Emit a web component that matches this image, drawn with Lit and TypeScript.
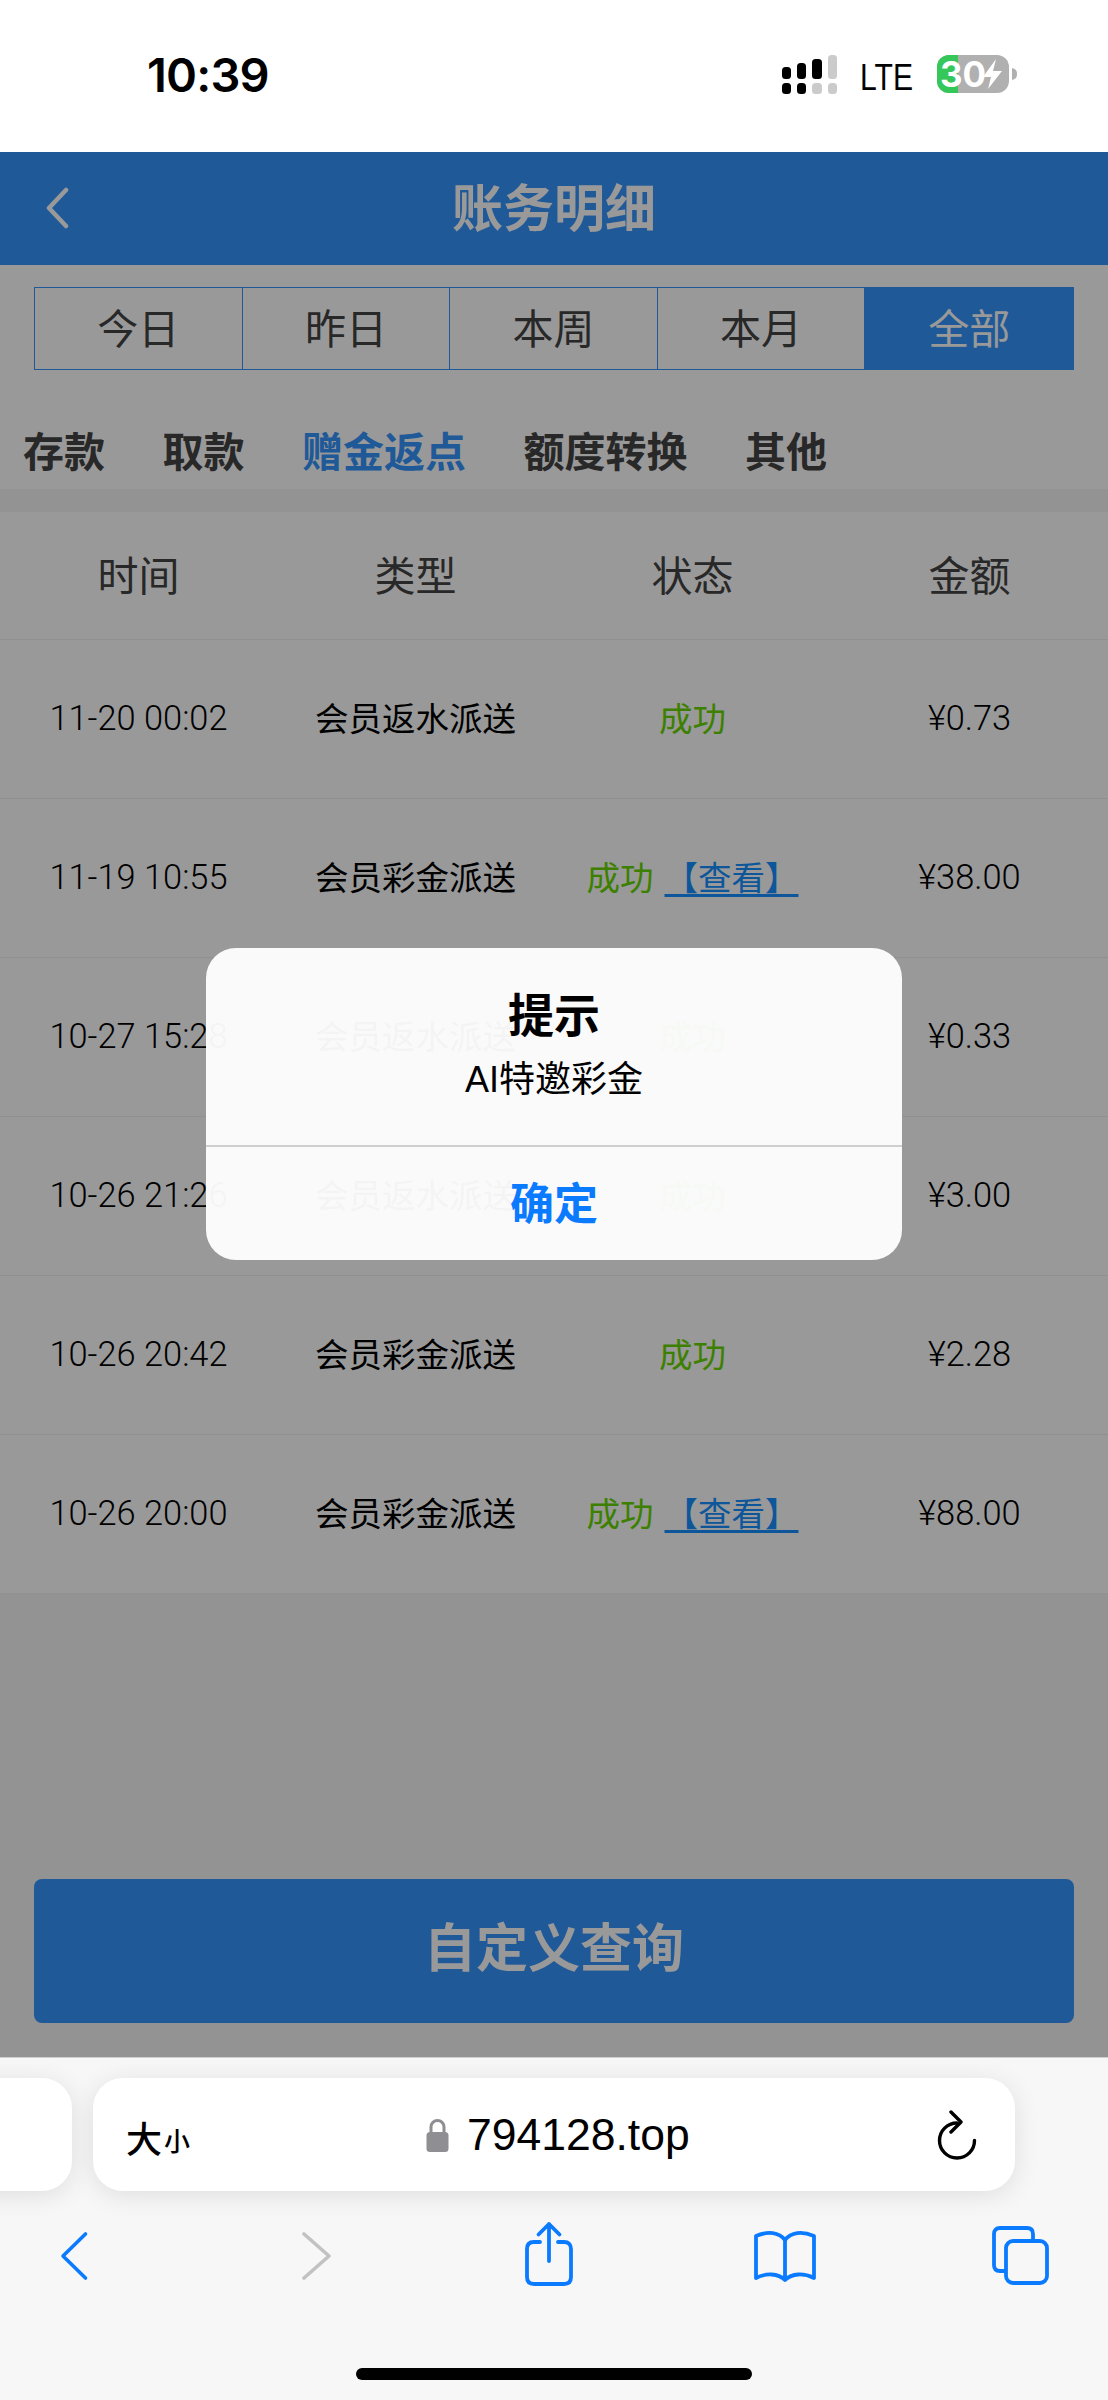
import { LitElement, html, css, svg } from "lit";
import { customElement } from "lit/decorators.js";

const rows = [
  { t: "11-20 00:02", k: "会员返水派送", v: false, a: "¥0.73" },
  { t: "11-19 10:55", k: "会员彩金派送", v: true, a: "¥38.00" },
  { t: "10-27 15:28", k: "会员返水派送", v: false, a: "¥0.33" },
  { t: "10-26 21:26", k: "会员返水派送", v: false, a: "¥3.00" },
  { t: "10-26 20:42", k: "会员彩金派送", v: false, a: "¥2.28" },
  { t: "10-26 20:00", k: "会员彩金派送", v: true, a: "¥88.00" },
];
const ranges = ["今日", "昨日", "本周", "本月", "全部"];
const cats = ["存款", "取款", "赠金返点", "额度转换", "其他"];
const heads = ["时间", "类型", "状态", "金额"];

@customElement("app-root")
export class AppRoot extends LitElement {
  static styles = css`
    :host {
      display: flex;
      flex-direction: column;
      width: 1108px;
      height: 2400px;
      overflow: hidden;
      background: #fff;
      color: #000;
      font-family: Roboto, "Noto Sans CJK SC", sans-serif;
    }
    .status {
      height: 152px;
      flex: none;
      background: #fff;
      display: flex;
      align-items: center;
      padding: 0 88px 2px 147px;
      box-sizing: border-box;
    }
    .time {
      font: 600 47px/1 Inter, sans-serif;
      letter-spacing: -0.8px;
      margin-bottom: 2px;
    }
    .status-right {
      margin-left: auto;
      display: block;
    }
    .status-svg {
      display: block;
      width: 240px;
      height: 44px;
    }
    .lte {
      font: 500 37px "Liberation Sans", sans-serif;
    }
    .batt {
      font: 700 35px Inter, sans-serif;
      fill: #fff;
    }
    main {
      flex: 1;
      position: relative;
      display: flex;
      flex-direction: column;
      background: #f5f5f5;
      overflow: hidden;
    }
    .nav {
      height: 113px;
      flex: none;
      background: #3494fd;
      color: #fff;
      display: flex;
      align-items: center;
      justify-content: center;
      position: relative;
      font-size: 51px;
      font-weight: 700;
      padding-bottom: 8px;
      box-sizing: border-box;
      font-family: "Noto Sans CJK SC", sans-serif;
    }
    .nav svg {
      position: absolute;
      left: 44px;
      top: 35px;
      width: 26px;
      height: 42px;
    }
    .top {
      background: #fff;
      height: 224px;
      flex: none;
      box-sizing: border-box;
      padding-top: 22px;
    }
    .ranges {
      display: grid;
      grid-template-columns: repeat(5, 1fr);
      margin: 0 34px;
      height: 83px;
      border: 1px solid #3494fd;
      box-sizing: border-box;
      font-size: 41px;
      font-family: "Noto Sans CJK SC", sans-serif;
      color: #444;
    }
    .ranges div {
      display: flex;
      align-items: center;
      justify-content: center;
      border-right: 1px solid #3494fd;
      padding-bottom: 5px;
    }
    .ranges div:last-child {
      border-right: 0;
    }
    .ranges .on {
      background: #3494fd;
      color: #fff;
    }
    .cats {
      display: flex;
      gap: 57.5px;
      padding: 50px 0 0 23px;
      font-size: 41px;
      line-height: 58px;
      font-weight: 700;
      font-family: "Noto Sans CJK SC", sans-serif;
      color: #444;
    }
    .cats .on {
      color: #3494fd;
    }
    .table {
      margin-top: 23px;
      background: #fff;
      flex: none;
    }
    .row {
      display: grid;
      grid-template-columns: repeat(4, 277px);
      height: 159px;
      align-items: center;
      justify-items: center;
      box-sizing: border-box;
      border-bottom: 1px solid #f0f0f0;
      padding-bottom: 2px;
      font-size: 34.4px;
      font-weight: 300;
    }
    .row.head {
      height: 128px;
      font-size: 41px;
      color: #444;
      font-family: "Noto Sans CJK SC", sans-serif;
      font-weight: 400;
      padding-bottom: 6px;
    }
    .cjk {
      font-family: "Noto Sans CJK SC", sans-serif;
      font-size: 33.5px;
      font-weight: 400;
      padding-bottom: 3px;
    }
    .st {
      display: flex;
      align-items: center;
      gap: 11px;
      font-family: "Noto Sans CJK SC", sans-serif;
      font-size: 33.5px;
      font-weight: 400;
      padding-bottom: 3px;
    }
    .ok {
      color: #66d500;
    }
    .link {
      color: #1490ff;
      text-decoration: underline;
      text-decoration-thickness: 3px;
      text-underline-offset: 4px;
      white-space: nowrap;
    }
    .cta-wrap {
      margin-top: auto;
      padding: 0 34px 34px;
    }
    .cta {
      height: 144px;
      border-radius: 8px;
      background: #3494fd;
      color: #fff;
      font-size: 52px;
      font-weight: 700;
      padding-bottom: 13px;
      box-sizing: border-box;
      font-family: "Noto Sans CJK SC", sans-serif;
      display: flex;
      align-items: center;
      justify-content: center;
    }
    .overlay {
      position: absolute;
      inset: 0;
      background: rgba(0, 0, 0, 0.4);
    }
    .dialog {
      position: absolute;
      left: 206px;
      top: 796px;
      width: 696px;
      height: 312px;
      border-radius: 30px;
      background: rgba(254, 254, 254, 0.96);
      display: flex;
      flex-direction: column;
      align-items: center;
      font-family: "Liberation Sans", "Noto Sans CJK SC", sans-serif;
    }
    .d-body {
      height: 199px;
      width: 100%;
      flex: none;
      box-sizing: border-box;
      border-bottom: 2px solid #cfcfcf;
      padding-top: 33px;
      text-align: center;
    }
    .d-title {
      font-size: 46px;
      line-height: 62px;
      font-weight: 700;
      font-family: "Noto Sans CJK SC", sans-serif;
    }
    .d-msg {
      font-size: 36px;
      line-height: 50px;
      margin-top: 12px;
    }
    .d-ok {
      flex: 1;
      display: flex;
      align-items: center;
      justify-content: center;
      font-size: 44px;
      font-weight: 700;
      padding-bottom: 6px;
      color: #0a7aff;
      font-family: "Noto Sans CJK SC", sans-serif;
    }
    .bottom {
      height: 343px;
      flex: none;
      background: #f7f7f7;
      border-top: 1px solid #cfcfcf;
      box-sizing: border-box;
      position: relative;
      overflow: hidden;
      display: flex;
      flex-direction: column;
    }
    .bars {
      display: flex;
      gap: 21px;
      margin: 20px 0 0 -300px;
      flex: none;
    }
    .pill {
      height: 113px;
      border-radius: 30px;
      background: #fff;
      box-shadow: 0 4px 26px rgba(0, 0, 0, 0.1);
      flex: none;
      box-sizing: border-box;
    }
    .pill.prev {
      width: 372px;
    }
    .pill.cur {
      width: 922px;
      display: flex;
      align-items: center;
      position: relative;
      padding: 0 37px 0 33px;
    }
    .size {
      display: flex;
      align-items: flex-end;
      gap: 2px;
      font-family: "Noto Sans CJK SC", sans-serif;
      font-size: 36px;
      line-height: 44px;
      font-weight: 500;
      padding-top: 4px;
    }
    .size small {
      font-size: 26px;
      line-height: 38px;
      font-weight: 500;
    }
    .addr {
      position: absolute;
      left: 333px;
      top: 0;
      bottom: 0;
      display: flex;
      align-items: center;
      gap: 18px;
      font: 44.5px "Liberation Sans", sans-serif;
    }
    .lock {
      width: 23px;
      height: 34px;
      display: block;
    }
    .reload {
      margin-left: auto;
      width: 42px;
      height: 50px;
      display: block;
    }
    .tools {
      display: block;
      width: 1108px;
      height: 80px;
      margin-top: 30px;
      flex: none;
    }
    .home {
      position: absolute;
      left: 356px;
      top: 310px;
      width: 396px;
      height: 12px;
      border-radius: 6px;
      background: #000;
    }
  `;

  private statusIcons() {
    const dark = "#000";
    const light = "#cbcbcb";
    return html`<svg class="status-svg" viewBox="0 0 240 44">
      ${svg`
        <rect x="2" y="14" width="9" height="12" rx="3.5" fill=${dark} />
        <rect x="2" y="30" width="9" height="11" rx="3.5" fill=${dark} />
        <rect x="17" y="10" width="9" height="16" rx="3.5" fill=${dark} />
        <rect x="17" y="30" width="9" height="11" rx="3.5" fill=${dark} />
        <rect x="32" y="6" width="10" height="20" rx="3.5" fill=${dark} />
        <rect x="32" y="30" width="10" height="11" rx="3.5" fill=${light} />
        <rect x="48" y="2" width="9" height="24" rx="3.5" fill=${light} />
        <rect x="48" y="30" width="9" height="11" rx="3.5" fill=${light} />
        <text x="80" y="37" class="lte" textLength="53" lengthAdjust="spacingAndGlyphs">LTE</text>
        <rect x="157" y="2" width="72" height="38" rx="12" fill="#b0b0b0" />
        <path d="M169 2 H178 V40 H169 A12 12 0 0 1 157 28 V14 A12 12 0 0 1 169 2 Z" fill="#35c759" />
        <path d="M232 15 C236 16 237 18 237 21 C237 24 236 26 232 27 Z" fill="#b0b0b0" />
        <text x="160" y="34" class="batt">30</text>
        <path d="M216 6 L203 24 H211 L208 36 L222 18 H213 Z" fill="#fff" />
      `}
    </svg>`;
  }

  private toolIcons() {
    const blue = "#0a7aff";
    return html`<svg class="tools" viewBox="0 0 1108 80" fill="none" stroke-linecap="round" stroke-linejoin="round">
      ${svg`
        <path d="M85.5 13 L63 35 L85.5 57" stroke=${blue} stroke-width="3.6" />
        <path d="M304 13 L329 35 L304 57" stroke="#c2c2c2" stroke-width="3.6" />
        <path d="M540 21 H534 Q527 21 527 28 V56 Q527 63 534 63 H564 Q571 63 571 56 V28 Q571 21 564 21 H558" stroke=${blue} stroke-width="3.8" />
        <path d="M549 3 V40 M538.5 13.5 L549 3 L559.5 13.5" stroke=${blue} stroke-width="3.8" />
        <path d="M785 19 C779 11 768 10 756 15 V57 C766 52 778 52 785 59 C792 52 804 52 814 57 V15 C802 10 791 11 785 19 Z M785 19 V59" stroke=${blue} stroke-width="3.8" />
        <path d="M1004 50 H1000 Q994 50 994 44 V13 Q994 7 1000 7 H1027 Q1033 7 1033 13 V19" stroke=${blue} stroke-width="3.8" />
        <rect x="1006" y="20" width="41" height="42" rx="7" stroke=${blue} stroke-width="3.8" />
      `}
    </svg>`;
  }

  render() {
    return html`
      <div class="status">
        <div class="time">10:39</div>
        <div class="status-right">${this.statusIcons()}</div>
      </div>
      <main>
        <div class="nav">
          <svg viewBox="0 0 26 42" fill="none"><path d="M22 3 L5 21 L22 39" stroke="#fff" stroke-width="4.5" stroke-linecap="round" stroke-linejoin="round" /></svg>
          账务明细
        </div>
        <div class="top">
          <div class="ranges">
            ${ranges.map((r, i) => html`<div class=${i === 4 ? "on" : ""}>${r}</div>`)}
          </div>
          <div class="cats">
            ${cats.map((c, i) => html`<span class=${i === 2 ? "on" : ""}>${c}</span>`)}
          </div>
        </div>
        <div class="table">
          <div class="row head">${heads.map((h) => html`<div>${h}</div>`)}</div>
          ${rows.map(
            (r) => html`<div class="row">
              <div>${r.t}</div>
              <div class="cjk">${r.k}</div>
              <div class="st">
                <span class="ok">成功</span>
                ${r.v ? html`<span class="link">【查看】</span>` : ""}
              </div>
              <div>${r.a}</div>
            </div>`
          )}
        </div>
        <div class="cta-wrap"><div class="cta">自定义查询</div></div>
        <div class="overlay"></div>
        <div class="dialog">
          <div class="d-body">
            <div class="d-title">提示</div>
            <div class="d-msg">AI特邀彩金</div>
          </div>
          <div class="d-ok">确定</div>
        </div>
      </main>
      <div class="bottom">
        <div class="bars">
          <div class="pill prev"></div>
          <div class="pill cur">
            <div class="size"><span>大</span><small>小</small></div>
            <div class="addr">
              <svg class="lock" viewBox="0 0 23 34">
                <path d="M5 15 V9 A6.5 6.5 0 0 1 18 9 V15" fill="none" stroke="#8e8e93" stroke-width="3" />
                <rect x="0.5" y="14" width="22" height="20" rx="3.5" fill="#8e8e93" />
              </svg>
              <span>794128.top</span>
            </div>
            <svg class="reload" viewBox="0 0 42 50" fill="none" stroke="#000" stroke-width="3.4" stroke-linecap="round" stroke-linejoin="round">
              <path d="M21 13 A17.5 17.5 0 1 0 38.5 30.5" />
              <path d="M15 2 L25 12 L15 22" />
            </svg>
          </div>
        </div>
        ${this.toolIcons()}
        <div class="home"></div>
      </div>
    `;
  }
}
